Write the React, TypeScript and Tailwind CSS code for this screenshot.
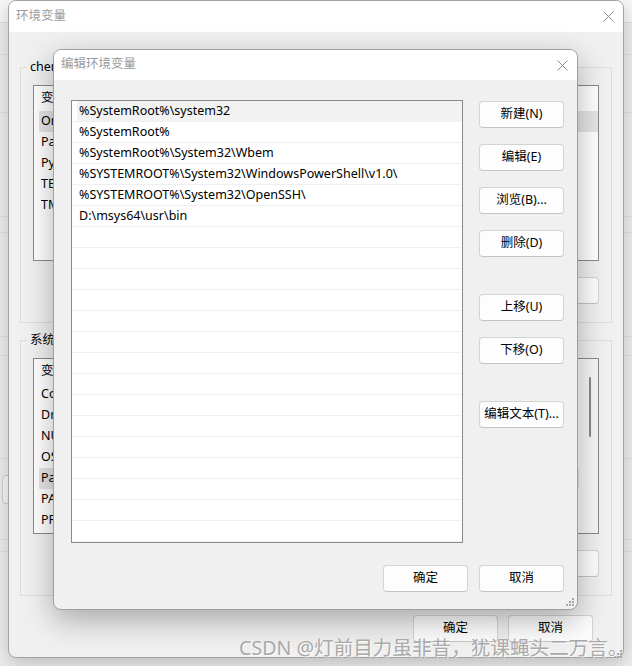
import React from "react";

const FONT = "font-['Noto_Sans','Noto_Sans_CJK_SC',sans-serif]";

function CloseX() {
  return (
    <svg width="11" height="11" viewBox="0 0 11 11" className="block">
      <path d="M0.5 0.5 L10.5 10.5 M10.5 0.5 L0.5 10.5" stroke="#8a8a8a" strokeWidth="1" fill="none" />
    </svg>
  );
}

function Grip() {
  return (
    <svg width="8" height="8" viewBox="0 0 8 8" className="block">
      <g fill="#a8a8a8">
        <rect x="6" y="0" width="2" height="2" />
        <rect x="3" y="3" width="2" height="2" />
        <rect x="6" y="3" width="2" height="2" />
        <rect x="0" y="6" width="2" height="2" />
        <rect x="3" y="6" width="2" height="2" />
        <rect x="6" y="6" width="2" height="2" />
      </g>
    </svg>
  );
}

function Btn({ children, className = "" }: { children: React.ReactNode; className?: string }) {
  return (
    <div
      className={`h-[27px] w-[85px] shrink-0 rounded-[4px] border border-[#d3d3d3] border-b-[#c4c4c4] bg-[#fdfdfd] flex items-center justify-center text-[12.5px] text-black ${className}`}
    >
      {children}
    </div>
  );
}

type Row = { name: string; selected?: boolean };

function VarList({ rows, scroll }: { rows: Row[]; scroll?: boolean }) {
  return (
    <div className="relative h-[176px] w-full border border-[#8a8a8a] bg-white overflow-hidden">
      <div className="h-[25px] flex items-center text-[12.5px] pl-[7px]">变量</div>
      {rows.map((r) => (
        <div key={r.name} className="h-[21px] pl-[5px]">
          <div className={`h-full flex items-center text-[12.5px] pl-[2px] ${r.selected ? "bg-[#e5e5e5]" : ""}`}>
            <span className="whitespace-nowrap">{r.name}</span>
          </div>
        </div>
      ))}
      {scroll && (
        <div className="absolute right-0 top-0 bottom-0 w-[19px] bg-[#f7f7f7] flex justify-center">
          <div className="mt-[18px] ml-[2px] h-[60px] w-[2px] rounded-full bg-[#8a8a8a]" />
        </div>
      )}
    </div>
  );
}

function GroupBox({ label, rows, scroll }: { label: string; rows: Row[]; scroll?: boolean }) {
  return (
    <div className="relative border border-[#dcdcdc] px-[12px] pt-[17px] pb-[18px]">
      <div className="absolute -top-[10px] left-[6px] px-[3px] bg-[#f0f0f0] text-[12.5px] leading-[17px]">{label}</div>
      <VarList rows={rows} scroll={scroll} />
      <div className="mt-[16px] flex justify-end gap-[10px]">
        <Btn>新建(N)...</Btn>
        <Btn>编辑(E)...</Btn>
        <Btn>删除(D)</Btn>
      </div>
    </div>
  );
}

const userRows: Row[] = [
  { name: "OneDrive", selected: true },
  { name: "Path" },
  { name: "PyCharm" },
  { name: "TEMP" },
  { name: "TMP" },
];

const sysRows: Row[] = [
  { name: "ComSpec" },
  { name: "DriverData" },
  { name: "NUMBER" },
  { name: "OS" },
  { name: "Path", selected: true },
  { name: "PATHEXT" },
  { name: "PROCESSOR" },
];

function OuterDialog() {
  return (
    <div className="absolute left-[8px] top-0 w-[616px] h-[658px] rounded-[8px] border border-[#a3a3a3] bg-[#f0f0f0] overflow-hidden shadow-[0_6px_20px_rgba(0,0,0,0.22)] flex flex-col">
      <div className="h-[31px] shrink-0 bg-white flex items-center justify-between pl-[7px] pr-[9px]">
        <span className="text-[12.5px] text-[#9b9b9b]">环境变量</span>
        <CloseX />
      </div>
      <div className="flex flex-col px-[11px] pt-[35px]">
        <GroupBox label="chen 的用户变量" rows={userRows} />
        <div className="h-[17px]" />
        <GroupBox label="系统变量" rows={sysRows} scroll />
        <div className="mt-[19px] flex justify-end gap-[10px] pr-[19px]">
          <Btn>确定</Btn>
          <Btn>取消</Btn>
        </div>
      </div>
    </div>
  );
}

const paths = [
  "%SystemRoot%\\system32",
  "%SystemRoot%",
  "%SystemRoot%\\System32\\Wbem",
  "%SYSTEMROOT%\\System32\\WindowsPowerShell\\v1.0\\",
  "%SYSTEMROOT%\\System32\\OpenSSH\\",
  "D:\\msys64\\usr\\bin",
];

function InnerDialog() {
  const rows = Array.from({ length: 21 }, (_, i) => paths[i] ?? "");
  return (
    <div className="absolute left-[53px] top-[49px] w-[525px] h-[561px] rounded-[8px] border border-[#9f9f9f] bg-[#f0f0f0] overflow-hidden shadow-[0_10px_30px_rgba(0,0,0,0.30)] flex flex-col">
      <div className="h-[30px] shrink-0 bg-white flex items-center justify-between pl-[7px] pr-[9px]">
        <span className="text-[12.5px] text-[#9b9b9b] -mt-[1px]">编辑环境变量</span>
        <CloseX />
      </div>
      <div className="flex pl-[17px] pr-[13px] pt-[20px] gap-[16px]">
        <div className="w-[392px] h-[443px] border border-[#8a8a8a] bg-white overflow-hidden">
          {rows.map((p, i) => (
            <div key={i} className="h-[21px] border-b border-[#f0f0f0]">
              <div className={`h-full ml-[5px] pl-[2px] pt-[1px] flex items-center text-[12.5px] whitespace-nowrap ${i === 0 ? "bg-[#f2f2f2]" : ""}`}>
                {p}
              </div>
            </div>
          ))}
        </div>
        <div className="flex flex-col gap-[16px] pt-[1px]">
          <Btn>新建(N)</Btn>
          <Btn>编辑(E)</Btn>
          <Btn>浏览(B)...</Btn>
          <Btn>删除(D)</Btn>
          <Btn className="mt-[21px]">上移(U)</Btn>
          <Btn>下移(O)</Btn>
          <Btn className="mt-[21px]">编辑文本(T)...</Btn>
        </div>
      </div>
      <div className="flex justify-end gap-[11px] pr-[13px] mt-[22px]">
        <Btn>确定</Btn>
        <Btn>取消</Btn>
      </div>
      <div className="absolute right-[3px] bottom-[3px]">
        <Grip />
      </div>
    </div>
  );
}

function Background() {
  return (
    <div className="absolute inset-0 flex flex-col">
      <div className="h-[23px] bg-[#f8f8f8] border-b border-[#e2e2e2]" />
      <div className="h-[32px] border-b border-[#e2e2e2]" />
      <div className="h-[58px] border-b border-[#e2e2e2]" />
      <div className="h-[104px] border-b border-[#e2e2e2]" />
      <div className="h-[16px] border-b border-[#e2e2e2]" />
      <div className="h-[104px] border-b border-[#e2e2e2]" />
      <div className="h-[19px] border-b border-[#e2e2e2]" />
      <div className="h-[103px] border-b border-[#e2e2e2]" />
      <div className="h-[81px] border-b border-[#e2e2e2]" />
      <div className="h-[12px] border-b border-[#e2e2e2]" />
    </div>
  );
}

export default function App() {
  return (
    <div className={`relative w-[632px] h-[666px] overflow-hidden bg-[#efefef] text-black ${FONT}`}>
      <Background />
      <div className="absolute left-[2px] top-[475px] w-[12px] h-[29px] rounded-[4px] border border-[#cfcfcf] bg-[#f8f8f8]" />
      <OuterDialog />
      <InnerDialog />
      <div className="absolute right-[10px] bottom-[8px]">
        <Grip />
      </div>
      <div className="absolute left-[239px] top-[635px] text-[19.6px] leading-[26px] whitespace-nowrap text-[#a9a9a9] [text-shadow:1px_1px_0_rgba(255,255,255,0.7)]">
        CSDN @灯前目力虽非昔，犹课蝇头二万言。
      </div>
    </div>
  );
}
